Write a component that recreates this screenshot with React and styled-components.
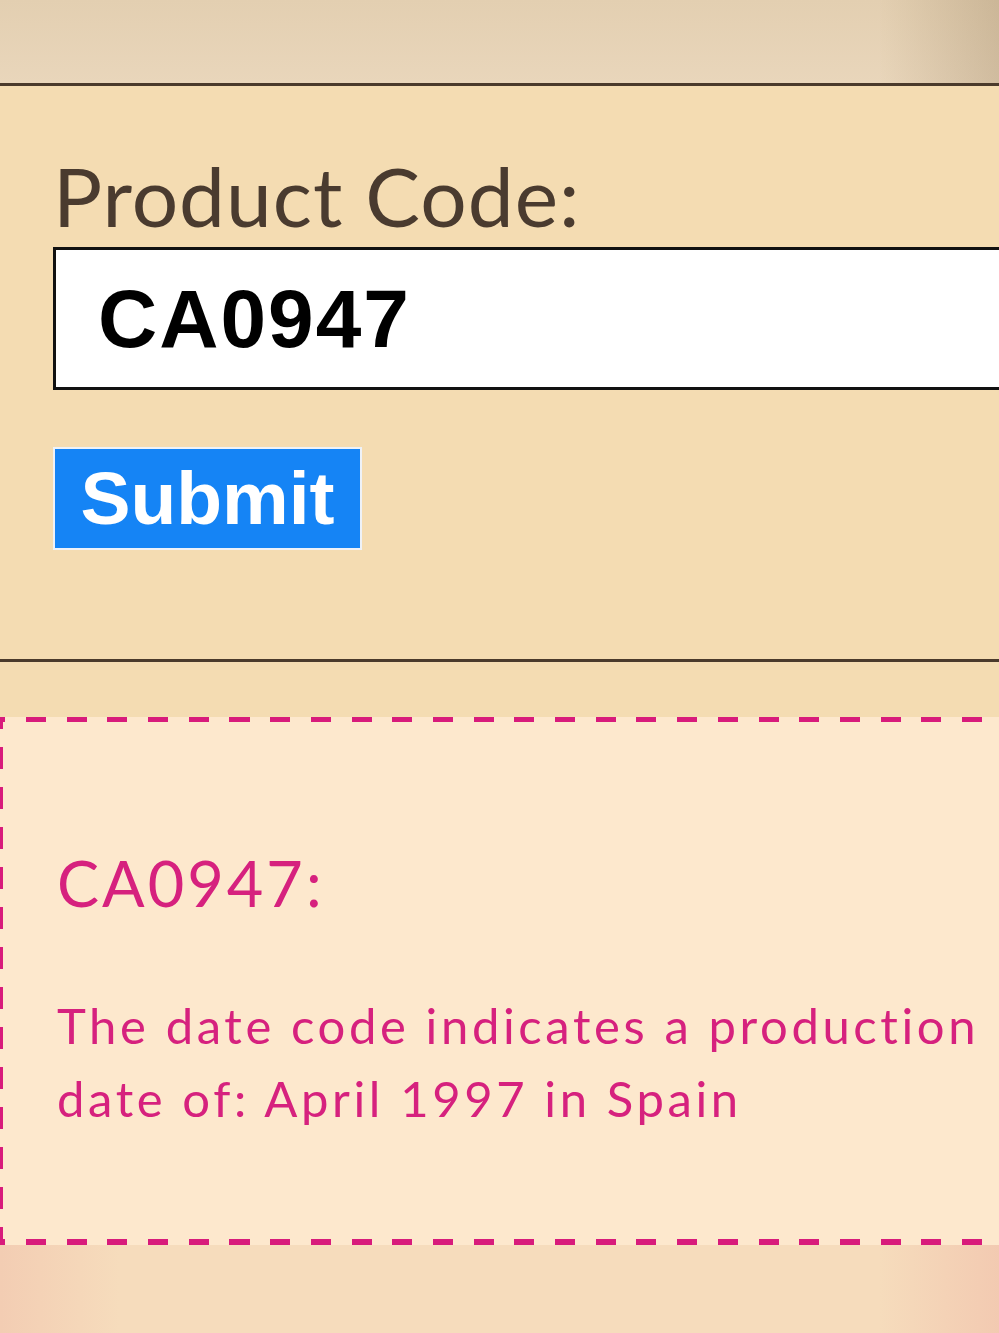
import styled, { createGlobalStyle } from 'styled-components'

const GlobalStyle = createGlobalStyle`
  html, body {
    margin: 0;
    padding: 0;
  }
  body {
    background: #f4dcb2;
    font-family: Lato, "Noto Sans", sans-serif;
    overflow: hidden;
  }
`

const PINK = '#d81b7b'

export default function App() {
  return (
    <Page>
      <GlobalStyle />
      <TopStrip />
      <FormPanel onSubmit={(e) => e.preventDefault()}>
        <FieldLabel htmlFor="code">Product Code:</FieldLabel>
        <CodeInput id="code" defaultValue="CA0947" />
        <SubmitButton type="submit">Submit</SubmitButton>
      </FormPanel>
      <ResultBox>
        <ResultTitle>CA0947:</ResultTitle>
        <ResultText>
          The date code indicates a production date of: April 1997 in Spain
        </ResultText>
      </ResultBox>
      <BottomStrip />
    </Page>
  )
}

const Page = styled.div`
  width: 999px;
  height: 1333px;
  overflow: hidden;
  display: flex;
  flex-direction: column;
  background: #f4dcb2;
`

const TopStrip = styled.div`
  height: 83px;
  flex-shrink: 0;
  background:
    linear-gradient(90deg, rgba(0, 0, 0, 0) 88%, rgba(120, 95, 60, 0.22) 100%),
    linear-gradient(180deg, #e3cfb1 0%, #e9d6bb 100%);
`

const FormPanel = styled.form`
  margin: 0;
  padding: 60px 0 109px 53px;
  border-top: 3px solid #4a3a2b;
  border-bottom: 3px solid #4a3a2b;
  background: #f4dcb2;
  display: flex;
  flex-direction: column;
  align-items: flex-start;
`

const FieldLabel = styled.label`
  font-family: Lato, sans-serif;
  font-size: 82px;
  line-height: 1.2;
  letter-spacing: 1px;
  color: #4a3b2f;
  margin-bottom: 3px;
`

const CodeInput = styled.input`
  display: block;
  box-sizing: border-box;
  width: 1000px;
  height: 143px;
  margin: 0;
  padding: 0 0 0 42px;
  border: 3px solid #111;
  border-radius: 0;
  background: #fff;
  color: #000;
  font-family: "Liberation Sans", Arial, sans-serif;
  font-weight: 700;
  font-size: 82px;
  letter-spacing: 2px;
  outline: none;
`

const SubmitButton = styled.button`
  margin-top: 57px;
  box-sizing: border-box;
  width: 309px;
  height: 103px;
  padding: 0;
  border: 2px solid #eef2f8;
  border-radius: 0;
  background: #1584f5;
  color: #fff;
  font-family: "Liberation Sans", Arial, sans-serif;
  font-weight: 700;
  font-size: 75px;
  line-height: 1;
  cursor: pointer;
`

/* dashed frame drawn with gradients so the dash length matches (20px on, ~20px off) */
const ResultBox = styled.section`
  margin: 55px 0 0 -2px;
  box-sizing: border-box;
  width: 1040px;
  height: 528px;
  flex-shrink: 0;
  padding: 128px 40px 0 59px;
  color: #d6217e;
  background:
    repeating-linear-gradient(90deg, ${PINK} 0 7.3px, transparent 7.3px 28px, ${PINK} 28px 40.7px) top left / 100% 5px no-repeat,
    repeating-linear-gradient(90deg, ${PINK} 0 7.3px, transparent 7.3px 28px, ${PINK} 28px 40.7px) bottom left / 100% 6px no-repeat,
    repeating-linear-gradient(180deg, ${PINK} 0 12px, transparent 12px 30px, ${PINK} 30px 40px) top left / 5px 100% no-repeat,
    #fde8cd;
`

const ResultTitle = styled.h2`
  margin: 0;
  font-family: Lato, sans-serif;
  font-weight: 400;
  font-size: 63px;
  line-height: 1.2;
  letter-spacing: 3px;
`

const ResultText = styled.p`
  margin: 68px 0 0;
  max-width: 935px;
  font-family: Lato, sans-serif;
  font-size: 49px;
  line-height: 73px;
  letter-spacing: 3.6px;
`

const BottomStrip = styled.div`
  flex: 1;
  background:
    linear-gradient(90deg, rgba(240, 190, 170, 0.5) 0%, rgba(0, 0, 0, 0) 12%, rgba(0, 0, 0, 0) 88%, rgba(240, 190, 170, 0.6) 100%),
    #f6dcbc;
`
